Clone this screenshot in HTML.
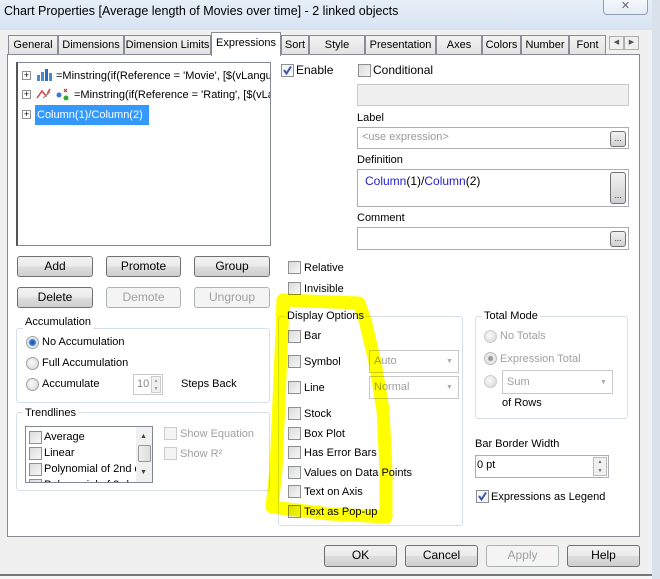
<!DOCTYPE html>
<html><head><meta charset="utf-8"><style>
*{box-sizing:border-box;margin:0;padding:0}
body{width:660px;height:579px;overflow:hidden;background:#f0f0f0;font-family:"Liberation Sans",sans-serif;font-size:11px;color:#000;position:relative}
.a{position:absolute}
.t{position:absolute;white-space:nowrap;line-height:14px}
.cb{position:absolute;width:13px;height:13px;border:1px solid #8e8f8f;background:linear-gradient(135deg,#dcdcdc,#f6f6f6)}
.rb{position:absolute;width:13px;height:13px;border-radius:50%;border:1px solid #a0a0a0;background:radial-gradient(circle at 40% 40%,#fafafa,#d4d4d4)}
.btn{position:absolute;height:21px;border:1px solid #707070;border-radius:3px;background:linear-gradient(#f2f2f2 0,#ebebeb 50%,#dddddd 51%,#cfcfcf 100%);text-align:center;line-height:19px;font-size:12px}
.dis{border-color:#adb2b5;background:#f4f4f4;color:#a0a0a0}
.grp{position:absolute;border:1px solid #d5dfe5;border-radius:3px}
.leg{position:absolute;background:#fff;padding:0 2px;line-height:14px;white-space:nowrap}
.box{position:absolute;border:1px solid #abadb3;background:#fff}
.tab{position:absolute;top:35px;height:20px;border:1px solid #898c95;border-bottom:none;background:linear-gradient(#f3f3f3,#e1e1e1);text-align:center;line-height:18px;overflow:hidden;white-space:nowrap}
.dots{position:absolute;width:16px;border:1px solid #707070;border-radius:3px;background:linear-gradient(#f2f2f2,#d0d0d0);font-size:8px;text-align:center}
.gray{color:#a0a0a0}
</style></head><body>
<div class="a" style="left:0;top:0;width:652px;height:30px;background:linear-gradient(#e6eef7,#d7e4f2)"></div>
<div class="a" style="left:652px;top:0;width:8px;height:579px;background:#d9e2ea"></div>
<div class="t" style="left:4px;top:4px;font-size:12.5px;">Chart Properties [Average length of Movies over time] - 2 linked objects</div>
<div class="a" style="left:603px;top:-2px;width:45px;height:17px;border:1px solid #8f9fb5;border-radius:0 0 4px 4px;background:linear-gradient(#f6f9fc,#e4ecf4);text-align:center;font-size:11px;color:#666;line-height:14px">✕</div>
<div class="a" style="left:0;top:30px;width:652px;height:545px;background:#f0f0f0"></div>
<div class="a" style="left:0;top:574px;width:652px;height:2px;background:#777"></div>
<div class="a" style="left:0;top:576px;width:652px;height:3px;background:#f7f7f7"></div>
<!-- tabs -->
<div class="tab" style="left:8px;width:50px">General</div>
<div class="tab" style="left:58px;width:66px">Dimensions</div>
<div class="tab" style="left:124px;width:87px">Dimension Limits</div>
<div class="tab" style="left:281px;width:28px">Sort</div>
<div class="tab" style="left:309px;width:56px">Style</div>
<div class="tab" style="left:365px;width:71px">Presentation</div>
<div class="tab" style="left:436px;width:46px">Axes</div>
<div class="tab" style="left:482px;width:39px">Colors</div>
<div class="tab" style="left:521px;width:48px">Number</div>
<div class="tab" style="left:569px;width:37px">Font</div>
<div class="a" style="left:609px;top:36px;width:15px;height:14px;border:1px solid #b0b0b0;background:#f0f0f0;font-size:7px;text-align:center;line-height:12px;color:#555">◀</div>
<div class="a" style="left:624px;top:36px;width:15px;height:14px;border:1px solid #b0b0b0;background:#f0f0f0;font-size:7px;text-align:center;line-height:12px;color:#555">▶</div>
<!-- panel -->
<div class="a" style="left:7px;top:54px;width:633px;height:483px;border:1px solid #898c95;background:#fff"></div>
<div class="a" style="left:211px;top:32px;width:70px;height:24px;border:1px solid #898c95;border-bottom:none;background:#fff;text-align:center;line-height:20px">Expressions</div>
<!-- tree -->
<div class="a" style="left:16px;top:62px;width:255px;height:184px;border:1px solid #828790;border-left:2px solid #555;background:#fff;overflow:hidden">
 <div class="a" style="left:4px;top:8px;width:9px;height:9px;border:1px solid #919191;font-size:9px;line-height:7px;text-align:center">+</div>
 <svg class="a" style="left:18px;top:5px" width="16" height="14"><rect x="1" y="7" width="3" height="6" fill="#4a8ad0"/><rect x="5" y="4" width="3" height="9" fill="#4a8ad0"/><rect x="9" y="1" width="3" height="12" fill="#2b6cc0"/><rect x="13" y="5" width="3" height="8" fill="#4a8ad0"/></svg>
 <div class="t" style="left:38px;top:6px">=Minstring(if(Reference = 'Movie', [$(vLanguage)])</div>
 <div class="a" style="left:4px;top:27px;width:9px;height:9px;border:1px solid #919191;font-size:9px;line-height:7px;text-align:center">+</div>
 <svg class="a" style="left:18px;top:24px" width="36" height="14"><path d="M1 11 L6 4 L10 9 L14 2" stroke="#c44" fill="none" stroke-width="1.5"/><path d="M7 11 L14 5" stroke="#999" stroke-width="1.2"/><circle cx="23" cy="8" r="2.5" fill="#3a78c8"/><circle cx="30" cy="11" r="2.5" fill="#3a3"/><path d="M28 2 l3 3 m0 -3 l-3 3" stroke="#c33" stroke-width="1.2"/></svg>
 <div class="t" style="left:56px;top:25px">=Minstring(if(Reference = 'Rating', [$(vLanguage)])</div>
 <div class="a" style="left:4px;top:47px;width:9px;height:9px;border:1px solid #919191;font-size:9px;line-height:7px;text-align:center">+</div>
 <div class="a" style="left:17px;top:42px;width:114px;height:20px;background:#3399ff"></div>
 <div class="t" style="left:19px;top:45px;color:#fff">Column(1)/Column(2)</div>
</div>
<!-- right top -->
<div class="cb" style="left:281px;top:64px;background:#f4f6fa;border-color:#8e8f8f"><svg width="11" height="11" style="position:absolute;left:0;top:0"><path d="M2 5 L4.5 8.5 L9 1.5" stroke="#3b56a8" stroke-width="2" fill="none"/></svg></div>
<div class="t" style="left:296px;top:63px;font-size:12px">Enable</div>
<div class="cb" style="left:358px;top:64px"></div>
<div class="t" style="left:373px;top:63px;font-size:12px">Conditional</div>
<div class="a" style="left:357px;top:84px;width:272px;height:22px;border:1px solid #c9c9c9;background:#f0f0f0"></div>
<div class="t" style="left:357px;top:111px">Label</div>
<div class="box" style="left:357px;top:127px;width:272px;height:22px"></div>
<div class="t gray" style="left:362px;top:130px;color:#9a9a9a">&lt;use expression&gt;</div>
<div class="dots" style="left:610px;top:131px;height:16px;line-height:14px">...</div>
<div class="t" style="left:357px;top:153px">Definition</div>
<div class="box" style="left:357px;top:169px;width:272px;height:38px"></div>
<div class="t" style="left:365px;top:174px;color:#2323c8;font-size:12px">Column<span style="color:#000">(1)/</span>Column<span style="color:#000">(2)</span></div>
<div class="dots" style="left:610px;top:172px;height:32px;line-height:46px">...</div>
<div class="t" style="left:357px;top:211px">Comment</div>
<div class="box" style="left:357px;top:227px;width:272px;height:23px"></div>
<div class="dots" style="left:610px;top:231px;height:16px;line-height:14px">...</div>
<!-- buttons -->
<div class="btn" style="left:17px;top:256px;width:76px">Add</div>
<div class="btn" style="left:106px;top:256px;width:75px">Promote</div>
<div class="btn" style="left:194px;top:256px;width:76px">Group</div>
<div class="btn" style="left:17px;top:287px;width:76px">Delete</div>
<div class="btn dis" style="left:106px;top:287px;width:75px">Demote</div>
<div class="btn dis" style="left:194px;top:287px;width:76px">Ungroup</div>
<div class="cb" style="left:288px;top:261px"></div><div class="t" style="left:304px;top:261px">Relative</div>
<div class="cb" style="left:288px;top:282px"></div><div class="t" style="left:304px;top:282px">Invisible</div>
<!-- accumulation -->
<div class="grp" style="left:16px;top:328px;width:254px;height:75px"></div>
<div class="leg" style="left:23px;top:315px">Accumulation</div>
<div class="rb" style="left:26px;top:336px;background:radial-gradient(circle,#1e4f9a 0,#3b7fd0 3px,#dfe8f3 4px,#eef2f6 6px)"></div><div class="t" style="left:42px;top:335px">No Accumulation</div>
<div class="rb" style="left:26px;top:357px"></div><div class="t" style="left:42px;top:356px">Full Accumulation</div>
<div class="rb" style="left:26px;top:378px"></div><div class="t" style="left:42px;top:377px">Accumulate</div>
<div class="a" style="left:133px;top:374px;width:30px;height:21px;border:1px solid #c9c9c9;background:#fff"></div>
<div class="t gray" style="left:137px;top:377px;color:#888">10</div>
<div class="a" style="left:151px;top:376px;width:10px;height:17px;border:1px solid #ccc;background:#f0f0f0;font-size:5px;line-height:8px;text-align:center;color:#999">▲<br>▼</div>
<div class="t" style="left:181px;top:377px">Steps Back</div>
<!-- trendlines -->
<div class="grp" style="left:16px;top:412px;width:254px;height:79px"></div>
<div class="leg" style="left:23px;top:406px">Trendlines</div>
<div class="a" style="left:25px;top:426px;width:128px;height:57px;border:1px solid #828790;background:#fff;overflow:hidden">
 <div class="cb" style="left:3px;top:4px"></div><div class="t" style="left:18px;top:3px">Average</div>
 <div class="cb" style="left:3px;top:20px"></div><div class="t" style="left:18px;top:19px">Linear</div>
 <div class="cb" style="left:3px;top:36px"></div><div class="t" style="left:18px;top:35px">Polynomial of 2nd d</div>
 <div class="cb" style="left:3px;top:52px"></div><div class="t" style="left:18px;top:51px">Polynomial of 3rd d</div>
 <div class="a" style="left:110px;top:0;width:16px;height:55px;background:#f0f0f0"></div>
 <div class="a" style="left:112px;top:18px;width:13px;height:17px;border:1px solid #999;border-radius:2px;background:linear-gradient(90deg,#eee,#ddd)"></div>
 <div class="t" style="left:114px;top:3px;font-size:7px;color:#444">▲</div>
 <div class="t" style="left:114px;top:39px;font-size:7px;color:#444">▼</div>
</div>
<div class="cb" style="left:164px;top:427px;border-color:#ccc;background:#f4f4f4"></div><div class="t gray" style="left:180px;top:427px">Show Equation</div>
<div class="cb" style="left:164px;top:447px;border-color:#ccc;background:#f4f4f4"></div><div class="t gray" style="left:180px;top:447px">Show R²</div>
<!-- display options -->
<div class="grp" style="left:278px;top:316px;width:185px;height:210px"></div>
<div class="leg" style="left:285px;top:309px">Display Options</div>
<div class="cb" style="left:288px;top:330px"></div><div class="t" style="left:304px;top:329px">Bar</div>
<div class="cb" style="left:288px;top:355px"></div><div class="t" style="left:304px;top:355px">Symbol</div>
<div class="cb" style="left:288px;top:381px"></div><div class="t" style="left:304px;top:381px">Line</div>
<div class="cb" style="left:288px;top:407px"></div><div class="t" style="left:304px;top:407px">Stock</div>
<div class="cb" style="left:288px;top:427px"></div><div class="t" style="left:304px;top:427px">Box Plot</div>
<div class="cb" style="left:288px;top:446px"></div><div class="t" style="left:304px;top:446px">Has Error Bars</div>
<div class="cb" style="left:288px;top:466px"></div><div class="t" style="left:304px;top:466px">Values on Data Points</div>
<div class="cb" style="left:288px;top:485px"></div><div class="t" style="left:304px;top:485px">Text on Axis</div>
<div class="cb" style="left:288px;top:505px"></div><div class="t" style="left:304px;top:505px">Text as Pop-up</div>
<div class="a" style="left:369px;top:350px;width:90px;height:23px;border:1px solid #c9c9c9;background:#fff"></div><div class="t gray" style="left:374px;top:354px">Auto</div><div class="t" style="left:446px;top:355px;font-size:7px;color:#aaa">▼</div>
<div class="a" style="left:369px;top:376px;width:90px;height:23px;border:1px solid #c9c9c9;background:#fff"></div><div class="t gray" style="left:374px;top:380px">Normal</div><div class="t" style="left:446px;top:381px;font-size:7px;color:#aaa">▼</div>
<!-- total mode -->
<div class="grp" style="left:475px;top:316px;width:153px;height:103px"></div>
<div class="leg" style="left:482px;top:309px">Total Mode</div>
<div class="rb" style="left:484px;top:330px;border-color:#ccc"></div><div class="t gray" style="left:500px;top:329px">No Totals</div>
<div class="rb" style="left:484px;top:352px;border-color:#bbb;background:radial-gradient(circle,#999 0,#999 2px,#e8e8e8 3px)"></div><div class="t gray" style="left:500px;top:352px">Expression Total</div>
<div class="rb" style="left:484px;top:375px;border-color:#ccc"></div>
<div class="a" style="left:502px;top:370px;width:111px;height:24px;border:1px solid #c9c9c9;background:#fff"></div><div class="t gray" style="left:507px;top:375px">Sum</div><div class="t" style="left:600px;top:376px;font-size:7px;color:#aaa">▼</div>
<div class="t" style="left:502px;top:396px">of Rows</div>
<div class="t" style="left:475px;top:437px">Bar Border Width</div>
<div class="box" style="left:475px;top:455px;width:134px;height:23px"></div>
<div class="t" style="left:477px;top:458px">0 pt</div>
<div class="a" style="left:593px;top:457px;width:14px;height:19px;border:1px solid #bbb;background:#f0f0f0;font-size:5px;line-height:9px;text-align:center;color:#666">▲<br>▼</div>
<div class="cb" style="left:476px;top:490px;background:#f4f6fa"><svg width="11" height="11" style="position:absolute;left:0;top:0"><path d="M2 5 L4.5 8.5 L9 1.5" stroke="#3b56a8" stroke-width="2" fill="none"/></svg></div>
<div class="t" style="left:491px;top:490px">Expressions as Legend</div>
<!-- bottom buttons -->
<div class="btn" style="left:324px;top:545px;width:73px;height:22px">OK</div>
<div class="btn" style="left:405px;top:545px;width:73px;height:22px">Cancel</div>
<div class="btn dis" style="left:486px;top:545px;width:73px;height:22px">Apply</div>
<div class="btn" style="left:567px;top:545px;width:73px;height:22px">Help</div>
<!-- highlighter -->
<svg class="a" style="left:0;top:0;mix-blend-mode:multiply" width="660" height="579"><path d="M283,300 L359,303 L365,320 L375,362 L383,410 L386,470 L386,517 L330,514 L272,507 L276,470 L279,400 L282,330 Z" fill="none" stroke="#ffff00" stroke-width="13" stroke-linejoin="round"/></svg>
</body></html>
